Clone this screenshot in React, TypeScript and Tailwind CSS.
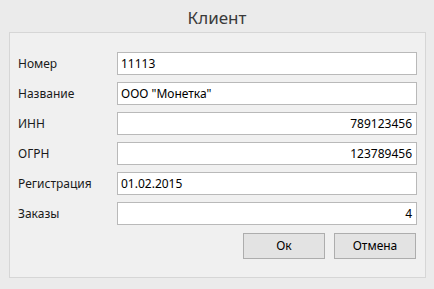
import React from "react";

const rows: { label: string; value: string; right?: boolean }[] = [
  { label: "Номер", value: "11113" },
  { label: "Название", value: 'ООО "Монетка"' },
  { label: "ИНН", value: "789123456", right: true },
  { label: "ОГРН", value: "123789456", right: true },
  { label: "Регистрация", value: "01.02.2015" },
  { label: "Заказы", value: "4", right: true },
];

export default function App() {
  return (
    <div
      className="w-[434px] h-[289px] bg-[#ebebeb] flex flex-col text-[#1a1a1a]"
      style={{ fontFamily: '"Noto Sans", "Liberation Sans", sans-serif' }}
    >
      <div className="h-[32px] flex items-center justify-center pt-[2px]">
        <span className="text-[17px] leading-none text-[#3a3a3a]">Клиент</span>
      </div>

      <div className="ml-[9px] mr-[8px] h-[246px] border border-[#d6d6d6] bg-[#f0f0f0] flex flex-col pt-[19px] pl-[8px] pr-[8px]">
        <div className="flex flex-col gap-[7px]">
          {rows.map((r) => (
            <div key={r.label} className="flex items-center h-[23px]">
              <span className="w-[99px] text-[12px] leading-none">{r.label}</span>
              <div
                className={
                  "w-[300px] h-[23px] bg-white border border-[#b9b9b9] flex items-center text-[12px] text-black " +
                  (r.right ? "justify-end pr-[4px]" : "pl-[3px]")
                }
              >
                {r.value}
              </div>
            </div>
          ))}
        </div>

        <div className="flex justify-end gap-[9px] mt-[8px] pr-[1px]">
          <button className="w-[82px] h-[26px] border border-[#adadad] bg-[#e3e3e3] text-[12px] text-black">
            Ок
          </button>
          <button className="w-[82px] h-[26px] border border-[#adadad] bg-[#e3e3e3] text-[12px] text-black">
            Отмена
          </button>
        </div>
      </div>
    </div>
  );
}
